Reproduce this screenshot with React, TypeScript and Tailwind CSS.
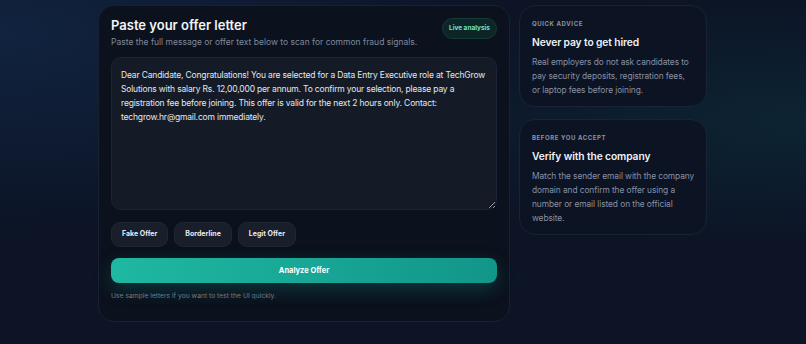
import { useState } from "react";

const sample =
  "Dear Candidate, Congratulations! You are selected for a Data Entry Executive role at TechGrow Solutions with salary Rs. 12,00,000 per annum. To confirm your selection, please pay a registration fee before joining. This offer is valid for the next 2 hours only. Contact: techgrow.hr@gmail.com immediately.";

function TipCard({
  label,
  title,
  body,
  bodyClass = "",
}: {
  label: string;
  title: string;
  body: string;
  bodyClass?: string;
}) {
  return (
    <div className="rounded-2xl border border-[#1a2333] bg-[#0c1322]/90 pl-[12px] pr-[8px] pt-[13px] pb-[9px]">
      <p className="text-[6px] leading-[9px] font-bold uppercase tracking-[0.1em] text-[#8a93a5]">{label}</p>
      <h3 className="mt-[8px] text-[10.25px] leading-[13px] font-semibold tracking-[-0.01em] text-[#eef2f7]">{title}</h3>
      <p className={`mt-[7px] text-[8.4px] leading-[13.75px] tracking-[-0.01em] text-[#8791a3] ${bodyClass}`}>{body}</p>
    </div>
  );
}

export default function App() {
  const [text, setText] = useState(sample);

  return (
    <div
      className="min-h-[344px] w-full overflow-hidden bg-[#0c1426] bg-[radial-gradient(ellipse_at_0%_10%,#11233f_0%,transparent_45%),radial-gradient(ellipse_at_100%_35%,#0d2433_0%,transparent_40%)]"
      style={{ fontFamily: "Inter, 'Noto Sans', sans-serif" }}
    >
      <div className="flex items-start gap-[9px] pl-[98px] pt-[5px]">
        {/* Main card */}
        <div className="w-[412px] rounded-2xl border border-[#182131] bg-[#0b111d] px-[12px] pt-[11px] pb-[20px]">
          <div className="flex items-start justify-between">
            <div>
              <h2 className="text-[13px] leading-[16px] font-semibold text-[#f1f4f8]">Paste your offer letter</h2>
              <p className="mt-[3px] text-[8.5px] leading-[12px] text-[#7f899b]">
                Paste the full message or offer text below to scan for common fraud signals.
              </p>
            </div>
            <span className="mt-[1px] whitespace-nowrap rounded-full border border-[#143a36] bg-[#0e2527] px-[6px] py-[5px] text-[6.5px] leading-[9px] font-bold text-[#6fe0c6]">
              Live analysis
            </span>
          </div>

          <textarea
            value={text}
            onChange={(e) => setText(e.target.value)}
            className="mt-[9px] block h-[153px] w-full resize-y rounded-[10px] border border-[#1c2433] bg-[#141b27] px-[9px] py-[10px] text-[8.5px] leading-[14px] tracking-[-0.02em] text-[#e3e7ee] outline-none"
          />

          <div className="mt-[12px] flex gap-[6px]">
            {["Fake Offer", "Borderline", "Legit Offer"].map((b) => (
              <button
                key={b}
                className="h-[25px] rounded-[9px] border border-[#1f2735] bg-[#181f2b] px-[10px] text-[7px] font-bold text-[#e6e9ef]"
              >
                {b}
              </button>
            ))}
          </div>

          <button className="mt-[11px] block h-[25px] w-full rounded-[8px] bg-gradient-to-r from-[#1fb8a2] to-[#11968a] text-[7.5px] font-bold text-white shadow-[0_6px_18px_rgba(20,170,150,0.25)]">
            Analyze Offer
          </button>

          <p className="mt-[8px] text-[6.75px] leading-[10px] text-[#6f7a8c]">Use sample letters if you want to test the UI quickly.</p>
        </div>

        {/* Side tips */}
        <div className="flex w-[188px] flex-col gap-[12px]">
          <TipCard
            label="Quick advice"
            title="Never pay to get hired"
            body="Real employers do not ask candidates to pay security deposits, registration fees, or laptop fees before joining."
            bodyClass="pr-[8px]"
          />
          <TipCard
            label="Before you accept"
            title="Verify with the company"
            body="Match the sender email with the company domain and confirm the offer using a number or email listed on the official website."
          />
        </div>
      </div>
    </div>
  );
}
